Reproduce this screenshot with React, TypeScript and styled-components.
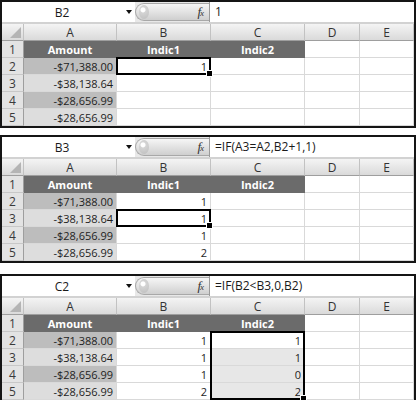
import styled, { createGlobalStyle, css } from "styled-components";

const GlobalStyle = createGlobalStyle`
  body {
    margin: 0;
    background: #fff;
    font-family: "Open Sans", "Noto Sans", sans-serif;
  }
`;

const Page = styled.div`
  width: 416px;
  display: flex;
  flex-direction: column;
`;

const Sheet = styled.div<{ $top: number }>`
  margin-top: ${({ $top }) => $top}px;
  border: 2px solid #151515;
  background: #fff;
`;

const FormulaBar = styled.div`
  display: flex;
  height: 20px;
  background: #e8e8e8;
  border-bottom: 2px solid #d2d2d2;
`;

const NameBox = styled.div`
  width: 133px;
  display: flex;
  align-items: center;
  background: #fff;
  font-size: 12px;
  color: #1a1a1a;
`;

const NameText = styled.span`
  flex: 1;
  text-align: center;
`;

const Arrow = styled.span`
  width: 13px;
  display: flex;
  justify-content: center;
  &::before {
    content: "";
    border-left: 3px solid transparent;
    border-right: 3px solid transparent;
    border-top: 4px solid #111;
  }
`;

const Pill = styled.div`
  width: 74px;
  display: flex;
  align-items: center;
  justify-content: space-between;
  margin: 1px 0;
  padding: 0 6px 0 3px;
  box-sizing: border-box;
  border-radius: 10px 0 0 10px;
  border: 1px solid #a8a8a8;
  border-right: none;
  background: linear-gradient(#f6f6f6, #cfcfcf);
`;

const Handle = styled.span`
  width: 10px;
  height: 14px;
  border-radius: 50%;
  background: radial-gradient(circle at 40% 35%, #fff 0 2px, #d4d4d4 3px, #bdbdbd);
`;

const Fx = styled.span`
  font-family: "Liberation Serif", serif;
  font-style: italic;
  font-size: 13px;
  color: #333;
  letter-spacing: -1px;
  sub {
    font-size: 9px;
    vertical-align: baseline;
  }
`;

const FormulaInput = styled.div`
  flex: 1;
  background: #fff;
  border-left: 1px solid #9a9a9a;
  padding-left: 5px;
  font-size: 12px;
  line-height: 20px;
  color: #1a1a1a;
`;

const Grid = styled.div`
  display: grid;
  grid-template-columns: 22px 93px 94px 94px 55px 1fr;
  grid-auto-rows: 17px;
`;

const ColHead = styled.div`
  display: flex;
  align-items: center;
  justify-content: center;
  background: linear-gradient(#f4f4f4, #dadada);
  border-right: 1px solid #c2c2c2;
  border-bottom: 1px solid #9e9e9e;
  font-size: 12px;
  color: #333;
`;

const Corner = styled(ColHead)`
  position: relative;
  &::after {
    content: "";
    position: absolute;
    right: 2px;
    bottom: 2px;
    border-left: 11px solid transparent;
    border-bottom: 11px solid #b4b4b4;
  }
`;

const RowHead = styled.div`
  display: flex;
  align-items: center;
  justify-content: center;
  background: #e3e3e3;
  border-right: 1px solid #9e9e9e;
  border-bottom: 1px solid #c8c8c8;
  font-size: 12px;
  color: #3a3a3a;
`;

type Tone = "none" | "head" | "dark" | "light" | "shade";
type Sel = "none" | "single" | "top" | "mid" | "bottom";

const tones: Record<Tone, ReturnType<typeof css>> = {
  none: css`
    background: #fff;
  `,
  head: css`
    background: #6b6b6b;
    color: #fff;
    font-weight: 700;
    justify-content: center;
    border-color: #6b6b6b;
  `,
  dark: css`
    background: #bdbdbd;
  `,
  light: css`
    background: #dddddd;
  `,
  shade: css`
    background: #e7e7e7;
  `,
};

const Cell = styled.div<{ $tone: Tone; $sel: Sel }>`
  position: relative;
  display: flex;
  align-items: center;
  justify-content: flex-end;
  padding: 0 3px;
  border-right: 1px solid #d9d9d9;
  border-bottom: 1px solid #d9d9d9;
  font-size: 11px;
  color: #1e1e1e;
  ${({ $tone }) => tones[$tone]}

  ${({ $sel }) =>
    $sel !== "none" &&
    css`
      &::after {
        content: "";
        position: absolute;
        left: -1px;
        right: -1px;
        top: ${$sel === "single" || $sel === "top" ? "-1px" : "0"};
        bottom: ${$sel === "single" || $sel === "bottom" ? "-1px" : "-1px"};
        border: 2px solid #000;
        border-top-width: ${$sel === "single" || $sel === "top" ? "2px" : "0"};
        border-bottom-width: ${$sel === "single" || $sel === "bottom" ? "2px" : "0"};
        pointer-events: none;
      }
    `}

  ${({ $sel }) =>
    ($sel === "single" || $sel === "bottom") &&
    css`
      &::before {
        content: "";
        position: absolute;
        right: -3px;
        bottom: -3px;
        width: 5px;
        height: 5px;
        background: #000;
        border: 1px solid #fff;
        z-index: 1;
      }
    `}
`;

const amounts = ["-$71,388.00", "-$38,138.64", "-$28,656.99", "-$28,656.99"];

type SheetSpec = {
  top: number;
  name: string;
  formula: string;
  b: string[];
  c: string[];
  selCol: "B" | "C";
  selFrom: number;
  selTo: number;
};

const sheets: SheetSpec[] = [
  { top: 0, name: "B2", formula: "1", b: ["1", "", "", ""], c: ["", "", "", ""], selCol: "B", selFrom: 2, selTo: 2 },
  { top: 7, name: "B3", formula: "=IF(A3=A2,B2+1,1)", b: ["1", "1", "1", "2"], c: ["", "", "", ""], selCol: "B", selFrom: 3, selTo: 3 },
  { top: 11, name: "C2", formula: "=IF(B2<B3,0,B2)", b: ["1", "1", "1", "2"], c: ["1", "1", "0", "2"], selCol: "C", selFrom: 2, selTo: 5 },
];

function selFor(s: SheetSpec, col: string, row: number): Sel {
  if (col !== s.selCol || row < s.selFrom || row > s.selTo) return "none";
  if (s.selFrom === s.selTo) return "single";
  if (row === s.selFrom) return "top";
  if (row === s.selTo) return "bottom";
  return "mid";
}

function SheetView({ s }: { s: SheetSpec }) {
  const rows = [2, 3, 4, 5];
  return (
    <Sheet $top={s.top}>
      <FormulaBar>
        <NameBox>
          <NameText>{s.name}</NameText>
          <Arrow />
        </NameBox>
        <Pill>
          <Handle />
          <Fx>
            f<sub>x</sub>
          </Fx>
        </Pill>
        <FormulaInput>{s.formula}</FormulaInput>
      </FormulaBar>
      <Grid>
        <Corner />
        {["A", "B", "C", "D", "E"].map((c) => (
          <ColHead key={c}>{c}</ColHead>
        ))}
        <RowHead>1</RowHead>
        <Cell $tone="head" $sel="none">Amount</Cell>
        <Cell $tone="head" $sel="none">Indic1</Cell>
        <Cell $tone="head" $sel="none">Indic2</Cell>
        <Cell $tone="none" $sel="none" />
        <Cell $tone="none" $sel="none" />
        {rows.map((r, i) => {
          const cSel = selFor(s, "C", r);
          const cTone: Tone = cSel === "mid" || cSel === "bottom" ? "shade" : "none";
          return [
            <RowHead key={`h${r}`}>{r}</RowHead>,
            <Cell key={`a${r}`} $tone={i % 2 === 0 ? "dark" : "light"} $sel="none">
              {amounts[i]}
            </Cell>,
            <Cell key={`b${r}`} $tone="none" $sel={selFor(s, "B", r)}>
              {s.b[i]}
            </Cell>,
            <Cell key={`c${r}`} $tone={cTone} $sel={cSel}>
              {s.c[i]}
            </Cell>,
            <Cell key={`d${r}`} $tone="none" $sel="none" />,
            <Cell key={`e${r}`} $tone="none" $sel="none" />,
          ];
        })}
      </Grid>
    </Sheet>
  );
}

export default function App() {
  return (
    <>
      <GlobalStyle />
      <Page>
        {sheets.map((s) => (
          <SheetView key={s.name} s={s} />
        ))}
      </Page>
    </>
  );
}
